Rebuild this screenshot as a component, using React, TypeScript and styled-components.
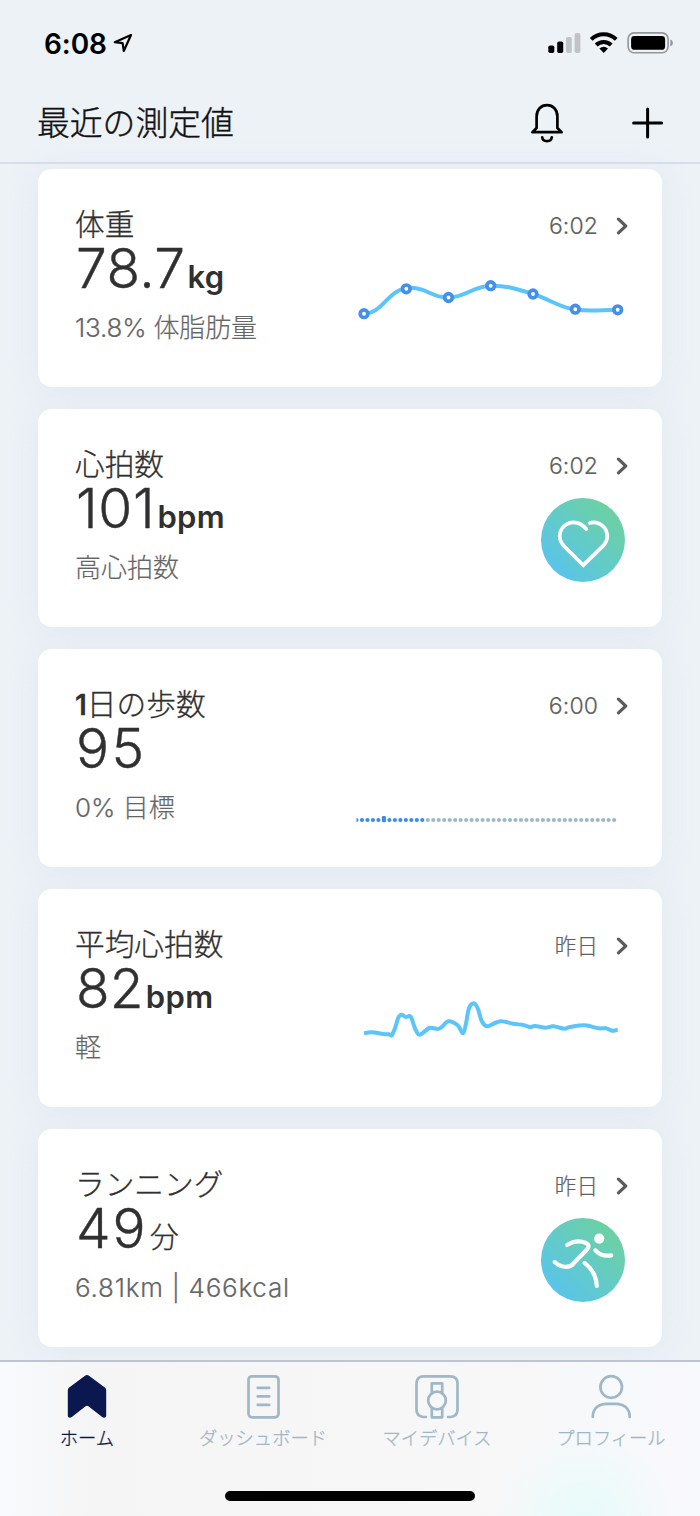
import React from "react";
import styled, { createGlobalStyle } from "styled-components";

const latin = `Inter, "Noto Sans CJK JP", sans-serif`;

const GlobalStyle = createGlobalStyle`
  * { box-sizing: border-box; }
  body { margin: 0; background: #edf2f7; font-family: ${latin}; }
  svg { display: block; flex: none; }
`;

const Screen = styled.div`
  width: 700px;
  height: 1516px;
  display: flex;
  flex-direction: column;
  overflow: hidden;
  background: #edf2f7;
`;

const Header = styled.header`
  flex: none;
  height: 164px;
  border-bottom: 2px solid #d5deea;
  background: #edf2f7;
`;

const StatusBar = styled.div`
  height: 84px;
  padding: 2px 26px 0 44px;
  display: flex;
  align-items: center;
  justify-content: space-between;
`;

const StatusGroup = styled.div`
  display: flex;
  align-items: center;
`;

const Clock = styled.span`
  width: 69px;
  padding-top: 1px;
  font-size: 28px;
  font-weight: 600;
  letter-spacing: -0.1px;
  color: #000;
  white-space: nowrap;
`;

const TitleBar = styled.div`
  height: 78px;
  padding: 0 36px 0 37px;
  display: flex;
  align-items: center;
  justify-content: space-between;
`;

const PageTitle = styled.h1`
  margin: 0;
  padding-bottom: 4px;
  font: 300 32.8px/44px "Noto Sans CJK JP", sans-serif;
  -webkit-text-stroke: 0.4px currentColor;
  color: #111;
`;

const Actions = styled.div`
  display: flex;
  align-items: center;
  gap: 67px;
`;

const Feed = styled.main`
  flex: 1;
  min-height: 0;
  padding: 5px 38px 0;
  display: flex;
  flex-direction: column;
  gap: 22.3px;
`;

const CardBox = styled.article`
  flex: none;
  height: 217.8px;
  padding: 36px 34px 0 37px;
  display: flex;
  justify-content: space-between;
  border-radius: 14px;
  background: #fff;
  box-shadow: 0 4px 32px rgba(215, 222, 236, 0.45);
`;

const Summary = styled.div`
  display: flex;
  flex-direction: column;
  color: #303030;
  white-space: nowrap;
`;

const CardTitle = styled.h2`
  margin: 0;
  height: 33px;
  font: 300 29.7px/36px "Noto Sans CJK JP", sans-serif;
  -webkit-text-stroke: 0.3px currentColor;
`;

const Strong = styled.span`
  font-family: Inter, sans-serif;
  font-weight: 600;
  font-size: 28px;
`;

const ValueRow = styled.div`
  height: 71px;
  display: flex;
  align-items: baseline;
  line-height: 60px;
`;

const Value = styled.span<{ $spacing: number }>`
  margin-left: 1px;
  font-size: 55px;
  font-weight: 300;
  letter-spacing: ${(p) => p.$spacing}px;
  -webkit-text-stroke: 0.4px currentColor;
`;

const Unit = styled.span<{ $cjk?: boolean }>`
  margin-left: 2px;
  font-size: ${(p) => (p.$cjk ? 29 : 31)}px;
  font-weight: ${(p) => (p.$cjk ? 300 : 600)};
  letter-spacing: 0.4px;
  -webkit-text-stroke: ${(p) => (p.$cjk ? 0.3 : 0)}px currentColor;
`;

const Note = styled.div<{ $spacing: number }>`
  height: 36px;
  font-size: 26px;
  font-weight: 300;
  line-height: 37px;
  letter-spacing: ${(p) => p.$spacing}px;
  -webkit-text-stroke: 0.2px currentColor;
  color: #666;
`;

const Side = styled.div`
  padding-top: 3px;
  display: flex;
  flex-direction: column;
  align-items: flex-end;
`;

const TimeRow = styled.div<{ $day: boolean }>`
  height: 36px;
  display: flex;
  align-items: center;
  gap: 18px;
  font-size: ${(p) => (p.$day ? 21.5 : 23)}px;
  font-weight: 300;
  line-height: 36px;
  letter-spacing: 0.1px;
  -webkit-text-stroke: 0.2px currentColor;
  color: #606060;
`;

const Badge = styled.div`
  margin: 14px 3px 0 0;
  width: 84px;
  height: 84px;
  border-radius: 50%;
  background: linear-gradient(45deg, #58c4ee 10%, #63cbc6 50%, #6ed1a0 90%);
`;

const TabBar = styled.nav`
  flex: none;
  height: 156px;
  border-top: 2px solid #bec5d2;
  background:
    radial-gradient(circle at 585px 160px, #e6fbfa 0, rgba(230, 251, 250, 0) 90px),
    linear-gradient(90deg, #f8fafd 0, #f5f5f5 90px, #f7f7f7 450px, #f8f9fc 700px);
  display: flex;
  flex-direction: column;
  align-items: center;
`;

const Tabs = styled.div`
  width: 100%;
  height: 129px;
  display: grid;
  grid-template-columns: 174px 178px 170px 178px;
`;

const Tab = styled.div<{ $active?: boolean }>`
  padding-top: 12px;
  display: flex;
  flex-direction: column;
  align-items: center;
  color: ${(p) => (p.$active ? "#0b174f" : "#9fb7c6")};
  font: 300 18.3px/30px "Noto Sans CJK JP", sans-serif;
  -webkit-text-stroke: 0.3px currentColor;
  white-space: nowrap;
`;

const HomeIndicator = styled.div`
  width: 250px;
  height: 10px;
  border-radius: 5px;
  background: #000;
`;

const Chevron = () => (
  <svg width="12" height="18" viewBox="0 0 12 18" fill="none" stroke="#5c5c5c" strokeWidth="3.2" strokeLinecap="round" strokeLinejoin="round">
    <path d="M2.5 2.2 9.7 9l-7.2 6.8" />
  </svg>
);

const weights: [number, number][] = [
  [10, 69.7], [52.3, 44.8], [94.5, 53.5], [136.7, 41.7], [179, 50], [221.3, 65.2], [263.7, 65.8],
];

const WeightChart = () => (
  <svg width="274" height="110" viewBox="0 0 274 110" fill="none">
    <path
      d="M10 69.7C29 69.7 34 44.8 55 43.8C73 43 76 53.5 94.5 53.5C112 53.5 119 41.7 138 41.7C155 41.7 164 45.5 179 50C194 54.5 206 64 221.3 65.6C238 68 247 65.8 263.7 65.8"
      stroke="#5bc4fa"
      strokeWidth="4"
    />
    {weights.map(([x, y]) => (
      <circle key={x} cx={x} cy={y} r="3.8" fill="#fff" stroke="#428fec" strokeWidth="3.7" />
    ))}
  </svg>
);

const StepsChart = () => (
  <svg width="274" height="110" viewBox="0 0 274 110">
    {Array.from({ length: 48 }, (_, i) => {
      const x = 2.5 + i * 5.482;
      const color = i < 13 ? "#3b8cea" : "#9eb8c5";
      if (i === 0) return <path key={i} d="M2.5 94q2 0 2 2t-2 2z" fill={color} />;
      if (i === 5) return <rect key={i} x={x - 2} y="92" width="4" height="6.2" rx="1.2" fill={color} />;
      return <circle key={i} cx={x} cy="96" r="2.1" fill={color} />;
    })}
  </svg>
);

const pulse: [number, number][] = [
  [10, 68.8], [17.7, 67.8], [29.3, 69.5], [35, 69.8], [37.7, 70.8], [41, 63.8], [44.3, 53.2], [47.7, 50.2], [51.7, 52.5],
  [56.7, 52.2], [61, 63.8], [65, 70.2], [71, 66.8], [76, 63.2], [85.3, 64.2], [94.3, 56.8], [103.7, 60.8],
  [109, 68.8], [112, 58.8], [115, 43.8], [119.7, 38.8], [123.7, 43.8], [127.7, 56.5], [133, 61.8], [141, 58.5],
  [147.7, 56.8], [159.3, 59.2], [169.3, 60.5], [176, 62.5], [181, 61.5], [192, 63.2], [199.3, 61.8], [210.3, 64.2],
  [216, 62.5], [231, 60.8], [244.3, 63.8], [251.7, 63.8], [258.7, 66.2], [263.7, 65.2],
];

const smooth = (pts: [number, number][]) =>
  pts.slice(1).reduce((d, p, i) => {
    const a = pts[i];
    const before = pts[i - 1] ?? a;
    const after = pts[i + 2] ?? p;
    const c1 = [a[0] + (p[0] - before[0]) / 6, a[1] + (p[1] - before[1]) / 6];
    const c2 = [p[0] - (after[0] - a[0]) / 6, p[1] - (after[1] - a[1]) / 6];
    return `${d}C${c1} ${c2} ${p}`;
  }, `M${pts[0]}`);

const PulseChart = () => (
  <svg width="274" height="110" viewBox="0 -0.5 274 110" fill="none">
    <path d={smooth(pulse)} stroke="#5bc4fa" strokeWidth="4" strokeLinejoin="round" />
  </svg>
);

const Heart = () => (
  <Badge>
    <svg width="84" height="84" viewBox="0 0 84 84" fill="none" stroke="#fff" strokeWidth="3.7" strokeLinecap="round" strokeLinejoin="miter">
      <path d="M45.3 31C42 27 38 24.3 32.7 24.3C24.7 24.3 18.7 30.7 18.7 38.3C18.7 42.5 20.3 45.3 23.2 48.2L42.3 67.2L61.8 48.2C64.7 45.3 66.3 42.5 66.3 38.3C66.3 30.7 60.3 24.3 52.3 24.3C50.9 24.3 49.8 24.6 48.7 25.1" />
    </svg>
  </Badge>
);

const Runner = () => (
  <Badge>
    <svg width="84" height="84" viewBox="0 0 84 84" fill="none" stroke="#fff" strokeWidth="4.2" strokeLinecap="round" strokeLinejoin="round">
      <circle cx="58.2" cy="20.6" r="5.1" fill="#fff" stroke="none" />
      <path d="M26 27C32.5 23 39.5 22.4 45 25C48.2 26.5 48.4 28.9 46 31.5L32.7 45.3C29.5 48.9 26.5 49.6 22 48.5C18.5 47.7 15.8 46 13.6 43.9" />
      <path d="M54.4 32.3C58.5 37 63.5 38.3 70.2 37.3" />
      <path d="M43.6 44.9C51 50.5 55.2 58 55.8 67.8" />
    </svg>
  </Badge>
);

type CardProps = {
  title: React.ReactNode;
  value: string;
  spacing?: number;
  unit?: string;
  cjkUnit?: boolean;
  note: string;
  noteSpacing?: number;
  time: string;
  children: React.ReactNode;
};

const Card = ({ title, value, spacing = 0, unit, cjkUnit, note, noteSpacing = 0, time, children }: CardProps) => (
  <CardBox>
    <Summary>
      <CardTitle>{title}</CardTitle>
      <ValueRow>
        <Value $spacing={spacing}>{value}</Value>
        {unit && <Unit $cjk={cjkUnit}>{unit}</Unit>}
      </ValueRow>
      <Note $spacing={noteSpacing}>{note}</Note>
    </Summary>
    <Side>
      <TimeRow $day={!time.includes(":")}>
        <span>{time}</span>
        <Chevron />
      </TimeRow>
      {children}
    </Side>
  </CardBox>
);

export default function App() {
  return (
    <Screen>
      <GlobalStyle />
      <Header>
        <StatusBar>
          <StatusGroup>
            <Clock>6:08</Clock>
            <svg width="20" height="20" viewBox="0 0 20 20" fill="none" stroke="#000" strokeWidth="2.2" strokeLinejoin="round">
              <path d="M18 2 1.8 9.2 9.6 10.2 10.8 18z" />
            </svg>
          </StatusGroup>
          <svg width="126" height="24" viewBox="0 0 126 24">
            <rect x="0.3" y="14.5" width="6" height="7.5" rx="1.8" />
            <rect x="9.2" y="10.5" width="6" height="11.5" rx="1.8" />
            <g fill="#c0c3c7">
              <rect x="18" y="6" width="5.8" height="16" rx="1.8" />
              <rect x="26.6" y="2" width="5.8" height="20" rx="1.8" />
            </g>
            <g fill="none" stroke="#000" strokeWidth="4">
              <path d="M43.2 8.4a17.7 17.7 0 0 1 25 0" />
              <path d="M48.2 14a10.6 10.6 0 0 1 15 0" />
            </g>
            <path d="M51.4 17.6q4.3-3.6 8.6 0L55.7 22z" />
            <rect x="80.1" y="1.9" width="40" height="19.8" rx="6" fill="none" stroke="#92969a" strokeWidth="1.6" />
            <rect x="83.1" y="5" width="34" height="13.8" rx="3.4" />
            <path d="M122.3 8.2q2.6 1.2 2.6 3.7t-2.6 3.7z" fill="#92969a" />
          </svg>
        </StatusBar>
        <TitleBar>
          <PageTitle>最近の測定値</PageTitle>
          <Actions>
            <svg width="36" height="42" viewBox="0 1 36 42" fill="none" stroke="#000" strokeWidth="2.7" strokeLinecap="round" strokeLinejoin="round">
              <path d="M7.6 27V15.5C7.6 8.5 12 4.2 18 4.2S28.4 8.5 28.4 15.5V27L32.6 31.2H3.4z" />
              <path d="M13.2 36.4C14 41.4 22 41.4 22.8 36.4" />
            </svg>
            <svg width="32" height="32" viewBox="0 0 32 32" stroke="#000" strokeWidth="3" strokeLinecap="round">
              <path d="M15.6 2v28M1.6 16h28" />
            </svg>
          </Actions>
        </TitleBar>
      </Header>
      <Feed>
        <Card title="体重" value="78.7" spacing={0.4} unit="kg" note="13.8% 体脂肪量" noteSpacing={-0.2} time="6:02">
          <WeightChart />
        </Card>
        <Card title="心拍数" value="101" spacing={0.7} unit="bpm" note="高心拍数" time="6:02">
          <Heart />
        </Card>
        <Card title={<><Strong>1</Strong>日の歩数</>} value="95" spacing={2.5} note="0% 目標" time="6:00">
          <StepsChart />
        </Card>
        <Card title="平均心拍数" value="82" spacing={0.2} unit="bpm" note="軽" time="昨日">
          <PulseChart />
        </Card>
        <Card title="ランニング" value="49" spacing={2} unit="分" cjkUnit note="6.81km | 466kcal" noteSpacing={0.75} time="昨日">
          <Runner />
        </Card>
      </Feed>
      <TabBar>
        <Tabs>
          <Tab $active>
            <svg width="44" height="48" viewBox="0 0 44 48">
              <path d="M20 1.7Q22 .3 24 1.7L39.8 13.4Q41.2 14.5 41.2 16.2V41.5C41.2 43.8 38.8 44.3 37.2 43L23.7 32.4Q22 31.2 20.3 32.4L6.8 43C5.2 44.3 2.8 43.8 2.8 41.5V16.2Q2.8 14.5 4.2 13.4z" fill="currentColor" />
            </svg>
            ホーム
          </Tab>
          <Tab>
            <svg width="44" height="48" viewBox="0 0 44 48" fill="none" stroke="currentColor" strokeWidth="2.7" strokeLinecap="round">
              <rect x="7.5" y="2.3" width="30" height="41" rx="3.5" />
              <path d="M16.7 13.8h11.5M16.7 22.3h11.5M16.7 30.8h11.5" />
            </svg>
            ダッシュボード
          </Tab>
          <Tab>
            <svg width="44" height="48" viewBox="0 0 44 48" fill="none" stroke="currentColor" strokeWidth="2.7" strokeLinecap="round" strokeLinejoin="round">
              <path d="M11 43H8.2Q1.5 42 1.5 35.5V9.5Q1.5 2.3 8.7 2.3H35.3Q42.5 2.3 42.5 9.5V35.5Q42.5 42 35.8 43H33" />
              <circle cx="22" cy="26.5" r="8.8" />
              <path d="M16.8 18.5V9.3H27.2V18.5M16.8 34.5V43.3H27.2V34.5" />
            </svg>
            マイデバイス
          </Tab>
          <Tab>
            <svg width="44" height="48" viewBox="0 0 44 48" fill="none" stroke="currentColor" strokeWidth="2.7" strokeLinecap="round">
              <circle cx="22.2" cy="13" r="10.8" />
              <path d="M3.8 43C3.8 34 10 29.8 17.5 29.8H27C34.5 29.8 40.7 34 40.7 43" />
            </svg>
            プロフィール
          </Tab>
        </Tabs>
        <HomeIndicator />
      </TabBar>
    </Screen>
  );
}
